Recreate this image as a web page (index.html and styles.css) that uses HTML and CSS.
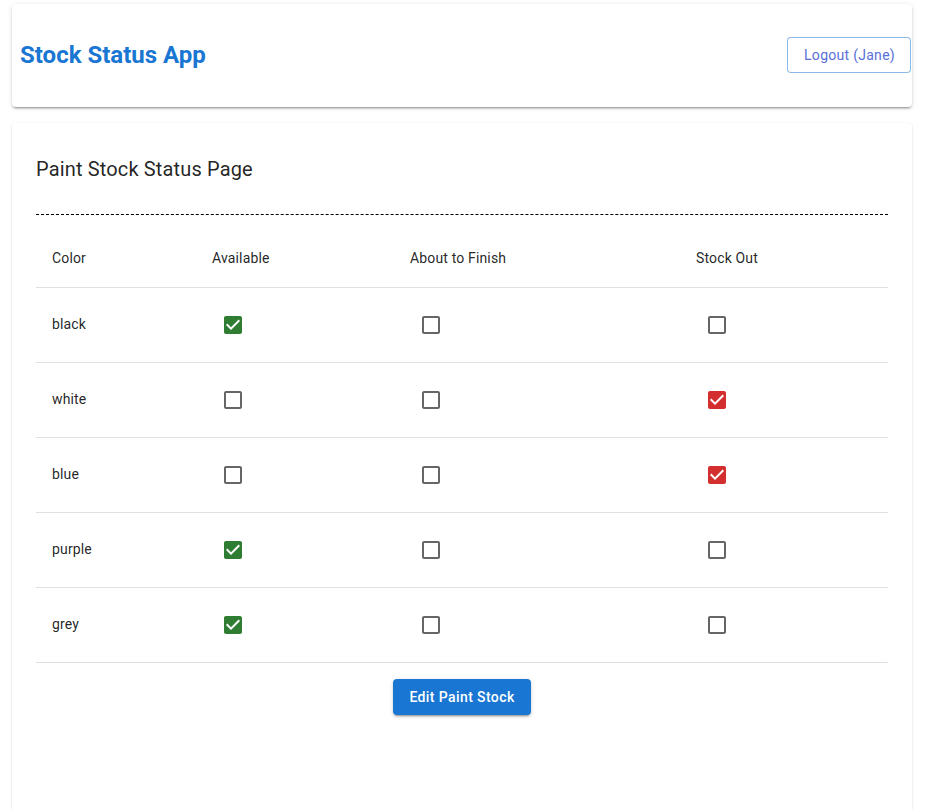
FILE: index.html
```
<!DOCTYPE html>
<html>
<head>
<meta charset="utf-8">
<link rel="stylesheet" href="styles.css">
</head>
<body>
<div class="page">
  <header class="appbar">
    <h1 class="app-title">Stock Status App</h1>
    <button class="btn-outlined">Logout (Jane)</button>
  </header>
  <main class="card">
    <h2 class="page-title">Paint Stock Status Page</h2>
    <div class="divider"></div>
    <div class="table-wrap">
      <table class="stock-table">
        <thead>
          <tr>
            <th class="c1">Color</th>
            <th class="c2">Available</th>
            <th class="c3">About to Finish</th>
            <th class="c4">Stock Out</th>
          </tr>
        </thead>
        <tbody id="rows"></tbody>
      </table>
    </div>
    <div class="actions">
      <button class="btn-contained">Edit Paint Stock</button>
    </div>
  </main>
</div>
<script src="app.js"></script>
</body>
</html>
```
FILE: app.js
```
var data = [
  ["black", 0],
  ["white", 2],
  ["blue", 2],
  ["purple", 0],
  ["grey", 0]
];
var unchecked = '<svg class="cb" viewBox="0 0 24 24"><path d="M19 5v14H5V5h14m0-2H5c-1.1 0-2 .9-2 2v14c0 1.1.9 2 2 2h14c1.1 0 2-.9 2-2V5c0-1.1-.9-2-2-2z"/></svg>';
function checked(cls) {
  return '<svg class="cb ' + cls + '" viewBox="0 0 24 24"><path d="M19 3H5c-1.11 0-2 .9-2 2v14c0 1.1.89 2 2 2h14c1.11 0 2-.9 2-2V5c0-1.1-.89-2-2-2zm-9 14l-5-5 1.41-1.41L10 14.17l7.59-7.59L19 8l-9 9z"/></svg>';
}
var html = "";
data.forEach(function (d) {
  html += '<tr><td class="name">' + d[0] + "</td>";
  for (var i = 0; i < 3; i++) {
    var icon = unchecked;
    if (i === d[1]) icon = checked(i === 0 ? "green" : "red");
    html += '<td><span class="cb-wrap">' + icon + "</span></td>";
  }
  html += "</tr>";
});
document.getElementById("rows").innerHTML = html;
```
FILE: styles.css
```
html, body {
  margin: 0;
  padding: 0;
  overflow: hidden;
  background: #fff;
}
body {
  font-family: Roboto, "Liberation Sans", sans-serif;
  color: rgba(0, 0, 0, 0.87);
}
.page {
  width: 900px;
  padding: 4px 0 0 12px;
}
.appbar {
  height: 103px;
  display: flex;
  align-items: center;
  justify-content: space-between;
  padding: 0 1px 0 8px;
  box-sizing: border-box;
  background: #fff;
  border-radius: 4px;
  box-shadow: 0px 3px 1px -2px rgba(0,0,0,0.2), 0px 2px 2px 0px rgba(0,0,0,0.14), 0px 1px 5px 0px rgba(0,0,0,0.12);
}
.app-title {
  margin: 0;
  font-size: 24px;
  font-weight: 700;
  color: #1976d2;
  line-height: 1.2;
  letter-spacing: 0;
}
.btn-outlined {
  font-family: Roboto, "Liberation Sans", sans-serif;
  font-size: 14px;
  font-weight: 400;
  color: #5a6fd6;
  background: #fff;
  border: 1px solid rgba(25, 118, 210, 0.5);
  border-radius: 4px;
  height: 36px;
  padding: 0 15px 0 16px;
  letter-spacing: 0.02em;
  margin-top: -1px;
}
.card {
  margin-top: 16px;
  min-height: 720px;
  background: #fff;
  border-radius: 4px;
  padding: 30px 24px 24px;
  box-sizing: border-box;
  box-shadow: 0px 2px 1px -1px rgba(0,0,0,0.2), 0px 1px 1px 0px rgba(0,0,0,0.14), 0px 1px 3px 0px rgba(0,0,0,0.12);
}
.page-title {
  margin: 0;
  font-size: 20px;
  font-weight: 400;
  line-height: 32px;
  letter-spacing: 0.0075em;
}
.divider {
  margin-top: 29px;
  border-top: 1px dashed #000;
}
.table-wrap {
  margin-top: 16px;
  border-radius: 4px;
  box-shadow: 0 0 1px rgba(0,0,0,0.06);
}
.stock-table {
  width: 100%;
  border-collapse: collapse;
  table-layout: fixed;
}
.stock-table th,
.stock-table td {
  box-sizing: border-box;
  text-align: left;
  padding: 16px;
  font-size: 14px;
  line-height: 24px;
  font-weight: 400;
  letter-spacing: 0.01071em;
  border-bottom: 1px solid rgb(224, 224, 224);
  vertical-align: middle;
}
.stock-table th,
.stock-table td.name {
  padding-top: 15px;
  padding-bottom: 17px;
}
.c1 { width: 160px; }
.c2 { width: 198px; }
.c3 { width: 286px; }
.c4 { width: 208px; }
.cb-wrap {
  display: inline-flex;
  padding: 9px;
  vertical-align: middle;
}
.cb {
  width: 24px;
  height: 24px;
  fill: rgba(0, 0, 0, 0.6);
  display: block;
}
.cb.green { fill: #2e7d32; }
.cb.red { fill: #d32f2f; }
.actions {
  display: flex;
  justify-content: center;
  margin-top: 16px;
}
.btn-contained {
  font-family: Roboto, "Liberation Sans", sans-serif;
  font-size: 14px;
  font-weight: 500;
  color: #fff;
  background: #1976d2;
  border: none;
  border-radius: 4px;
  height: 36px;
  padding: 0 16px;
  letter-spacing: 0.02857em;
  box-shadow: 0px 3px 1px -2px rgba(0,0,0,0.2), 0px 2px 2px 0px rgba(0,0,0,0.14), 0px 1px 5px 0px rgba(0,0,0,0.12);
}
```
